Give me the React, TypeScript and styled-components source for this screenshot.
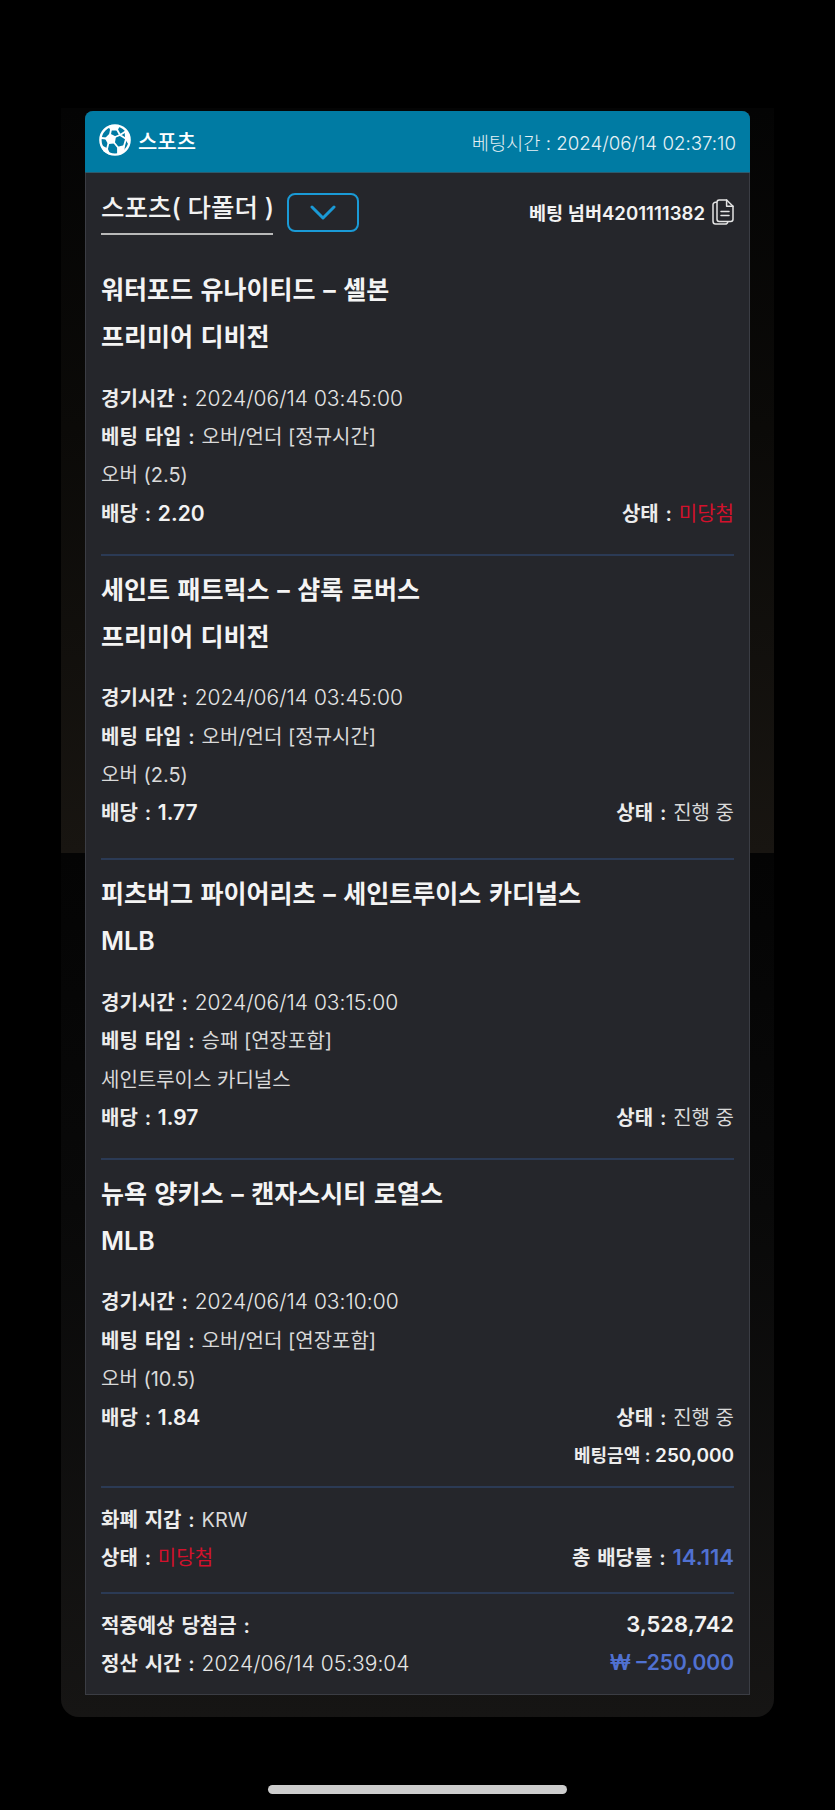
import React from 'react'
import styled, { createGlobalStyle } from 'styled-components'

interface Bet {
  match: string
  league: string
  time: string
  betType: string
  pick: string
  odds: string
  status: string
  lost?: boolean
  tall?: boolean
  amount?: string
}

const bets: Bet[] = [
  {
    match: '워터포드 유나이티드 – 셸본',
    league: '프리미어 디비전',
    time: '2024/06/14 03:45:00',
    betType: '오버/언더 [정규시간]',
    pick: '오버 (2.5)',
    odds: '2.20',
    status: '미당첨',
    lost: true,
  },
  {
    match: '세인트 패트릭스 – 샴록 로버스',
    league: '프리미어 디비전',
    time: '2024/06/14 03:45:00',
    betType: '오버/언더 [정규시간]',
    pick: '오버 (2.5)',
    odds: '1.77',
    status: '진행 중',
    tall: true,
  },
  {
    match: '피츠버그 파이어리츠 – 세인트루이스 카디널스',
    league: 'MLB',
    time: '2024/06/14 03:15:00',
    betType: '승패 [연장포함]',
    pick: '세인트루이스 카디널스',
    odds: '1.97',
    status: '진행 중',
  },
  {
    match: '뉴욕 양키스 – 캔자스시티 로열스',
    league: 'MLB',
    time: '2024/06/14 03:10:00',
    betType: '오버/언더 [연장포함]',
    pick: '오버 (10.5)',
    odds: '1.84',
    status: '진행 중',
    amount: '250,000',
  },
]

function BallIcon() {
  return (
    <svg width="32" height="32" viewBox="0 0 32 32" fill="#fff" stroke="#fff" strokeWidth="1.8" strokeLinejoin="round" strokeLinecap="round">
      <circle cx="16" cy="16" r="14.6" fill="none" strokeWidth="2.4" />
      <path d="M11 10.5l5 2.5-1 5.5-5.5.5L7 14.5Z" />
      <path d="M10.5 2.5h9L18 5.5h-6Z" />
      <path d="M26.5 7.5l3.5 6-.5 5.5-2.5-4.5Z" />
      <path d="M19 23.5l6-1.5-.5 5.5-5.5 2.5Z" />
      <path d="M3 22.5l5 2.5 2 4.5-4.5-2.5Z" />
      <path fill="none" d="M11 10.5L12 5.5M18 5.5l3 5.5M16 13l5-2 5.5 3.5M21 11l5.5-3.5M15 18.5l4 5M25 22l2-7M9.5 19L8 25M7 14.5L2.5 14" />
    </svg>
  )
}

function CopyIcon() {
  return (
    <svg width="22" height="26" viewBox="0 0 22 26" fill="none" stroke="#e4e4e4" strokeWidth="1.5" strokeLinejoin="round" strokeLinecap="round">
      <path d="M4.5 3.2H3.6C2.2 3.2 1 4.4 1 5.8v16.4C1 23.8 2.2 25 3.6 25h9.6c1.3 0 2.4-1 2.6-2.2" />
      <path d="M7.2 1H14.6L21 7.2V20.2c0 1.2-1 2.2-2.2 2.2H7.2C6 22.4 5 21.4 5 20.2V3.2C5 2 6 1 7.2 1Z" />
      <path d="M14.6 1V7.2H21" />
      <path d="M9 12.6h8M9 16.4h8" />
    </svg>
  )
}

function BetBlock({ bet }: { bet: Bet }) {
  return (
    <Block $gap={bet.amount ? 12 : bet.tall ? 27 : 22}>
      <Title>{bet.match}</Title>
      <Title>{bet.league}</Title>
      <Details>
        <Row>
          <span>
            <Label>경기시간 : </Label>
            <DateValue>{bet.time}</DateValue>
          </span>
        </Row>
        <Row>
          <span>
            <Label>베팅 타입 : </Label>
            <Value>{bet.betType}</Value>
          </span>
        </Row>
        <Row>
          <Value>{bet.pick}</Value>
        </Row>
        <Row>
          <span>
            <Label>배당 : </Label>
            <Strong>{bet.odds}</Strong>
          </span>
          <span>
            <Label>상태 : </Label>
            <Value $lost={bet.lost}>{bet.status}</Value>
          </span>
        </Row>
        {bet.amount && (
          <Row $end>
            <span>
              <AmountLabel>베팅금액 : </AmountLabel>
              <AmountValue>{bet.amount}</AmountValue>
            </span>
          </Row>
        )}
      </Details>
    </Block>
  )
}

export default function App() {
  return (
    <Screen>
      <GlobalStyle />
      <Backdrop>
        <Card>
          <CardHeader>
            <HeaderTitle>
              <BallIcon />
              <span>스포츠</span>
            </HeaderTitle>
            <HeaderTime>베팅시간 : 2024/06/14 02:37:10</HeaderTime>
          </CardHeader>
          <CardBody>
            <TopRow>
              <Category>스포츠( 다폴더 )</Category>
              <ToggleButton>
                <svg width="26" height="15" viewBox="0 0 26 15" fill="none" stroke="#1a9ad6" strokeWidth="3" strokeLinecap="round" strokeLinejoin="round">
                  <path d="M2 2l11 11L24 2" />
                </svg>
              </ToggleButton>
              <BetNumber>
                <span>베팅 넘버4201111382</span>
                <CopyIcon />
              </BetNumber>
            </TopRow>
            {bets.map((bet) => (
              <BetBlock key={bet.match} bet={bet} />
            ))}
            <Summary>
              <Row>
                <span>
                  <Label>화폐 지갑 : </Label>
                  <Value>KRW</Value>
                </span>
              </Row>
              <Row>
                <span>
                  <Label>상태 : </Label>
                  <Value $lost>미당첨</Value>
                </span>
                <span>
                  <Label>총 배당률 : </Label>
                  <Blue>14.114</Blue>
                </span>
              </Row>
            </Summary>
            <Totals>
              <Row>
                <Label>적중예상 당첨금 :</Label>
                <Strong $big>3,528,742</Strong>
              </Row>
              <Row>
                <span>
                  <Label>정산 시간 : </Label>
                  <DateValue>2024/06/14 05:39:04</DateValue>
                </span>
                <Blue $big>₩ –250,000</Blue>
              </Row>
            </Totals>
          </CardBody>
        </Card>
      </Backdrop>
      <HomeIndicator />
    </Screen>
  )
}

const GlobalStyle = createGlobalStyle`
  html, body { margin: 0; padding: 0; background: #000; }
  body { font-family: Inter, "Noto Sans CJK KR", sans-serif; }
  * { box-sizing: border-box; }
`

const Screen = styled.div`
  width: 835px;
  height: 1810px;
  padding-top: 108px;
  background: #000;
  overflow: hidden;
`

const Backdrop = styled.div`
  width: 713px;
  height: 1609px;
  margin-left: 61px;
  padding: 3px 0 0 24px;
  border-radius: 0 0 18px 18px;
  background: linear-gradient(
    180deg,
    #040404 0,
    #0b0a08 320px,
    #181511 745px,
    #040404 745px,
    #090909 1100px,
    #161514 1609px
  );
`

const Card = styled.div`
  width: 665px;
  height: 1584px;
  border-radius: 8px 8px 0 0;
  background: #25262b;
  border: 1px solid #3b3d44;
  border-top: 0;
`

const CardHeader = styled.div`
  display: flex;
  align-items: center;
  justify-content: space-between;
  height: 62px;
  margin: 0 -1px;
  padding: 0 14px;
  background: #007ba3;
  border-radius: 8px 8px 0 0;
  border-bottom: 1px solid #2d5a6c;
  color: #fff;
`

const HeaderTitle = styled.div`
  display: flex;
  align-items: center;
  gap: 7px;
  font-size: 21px;
  font-weight: 500;
  margin-top: -3px;
`

const HeaderTime = styled.div`
  font-size: 18.7px;
  font-weight: 300;
  color: #e6f1f5;
`

const CardBody = styled.div`
  padding: 0 15px;
`

const TopRow = styled.div`
  display: flex;
  align-items: flex-start;
  height: 94px;
  padding-top: 19px;
`

const Category = styled.div`
  width: 172px;
  height: 43px;
  font-size: 25.5px;
  font-weight: 500;
  line-height: 32px;
  color: #f2f2f2;
  white-space: nowrap;
  border-bottom: 2px solid #b9b9b9;
`

const ToggleButton = styled.button`
  display: flex;
  align-items: center;
  justify-content: center;
  width: 72px;
  height: 39px;
  margin: 1px 0 0 14px;
  background: transparent;
  border: 2px solid #1a9ad6;
  border-radius: 8px;
  padding: 0;
`

const BetNumber = styled.div`
  display: flex;
  align-items: center;
  gap: 7px;
  margin: 6px 0 0 auto;
  font-size: 18.6px;
  font-weight: 600;
  color: #f2f2f2;
`

const Block = styled.section<{ $gap: number }>`
  padding-bottom: ${(p) => p.$gap}px;
  margin-bottom: 11px;
  border-bottom: 2px solid #2b3a55;
`

const Title = styled.div`
  height: 47px;
  line-height: 47px;
  font-size: 25px;
  font-weight: 600;
  word-spacing: 1.3px;
  color: #f4f4f4;
  white-space: nowrap;
`

const Details = styled.div`
  margin-top: 17px;
`

const Row = styled.div<{ $end?: boolean }>`
  display: flex;
  align-items: center;
  justify-content: ${(p) => (p.$end ? 'flex-end' : 'space-between')};
  height: 38.4px;
  font-size: 20px;
  white-space: pre;
`

const Label = styled.span`
  font-weight: 600;
  word-spacing: 1.8px;
  color: #ececec;
`

const Value = styled.span<{ $lost?: boolean }>`
  font-weight: 400;
  color: ${(p) => (p.$lost ? '#d3112c' : '#d9d9d9')};
`

const DateValue = styled.span`
  font-size: 21px;
  font-weight: 300;
  color: #e6e6e6;
`

const Strong = styled.span<{ $big?: boolean }>`
  font-weight: 600;
  font-size: ${(p) => (p.$big ? 22 : 21)}px;
  color: #f2f2f2;
`

const Blue = styled.span<{ $big?: boolean }>`
  font-weight: 600;
  font-size: ${(p) => (p.$big ? 21 : 22)}px;
  color: #5071d1;
`

const AmountLabel = styled.span`
  font-size: 18px;
  font-weight: 600;
  color: #ececec;
`

const AmountValue = styled.span`
  font-size: 19px;
  font-weight: 600;
  color: #f2f2f2;
`

const Summary = styled.section`
  padding: 0.5px 0 16px;
  margin-bottom: 11px;
  border-bottom: 2px solid #2b3a55;
`

const Totals = styled.section``

const HomeIndicator = styled.div`
  width: 299px;
  height: 9px;
  margin: 68px 0 0 268px;
  border-radius: 5px;
  background: #cdcdcd;
`
